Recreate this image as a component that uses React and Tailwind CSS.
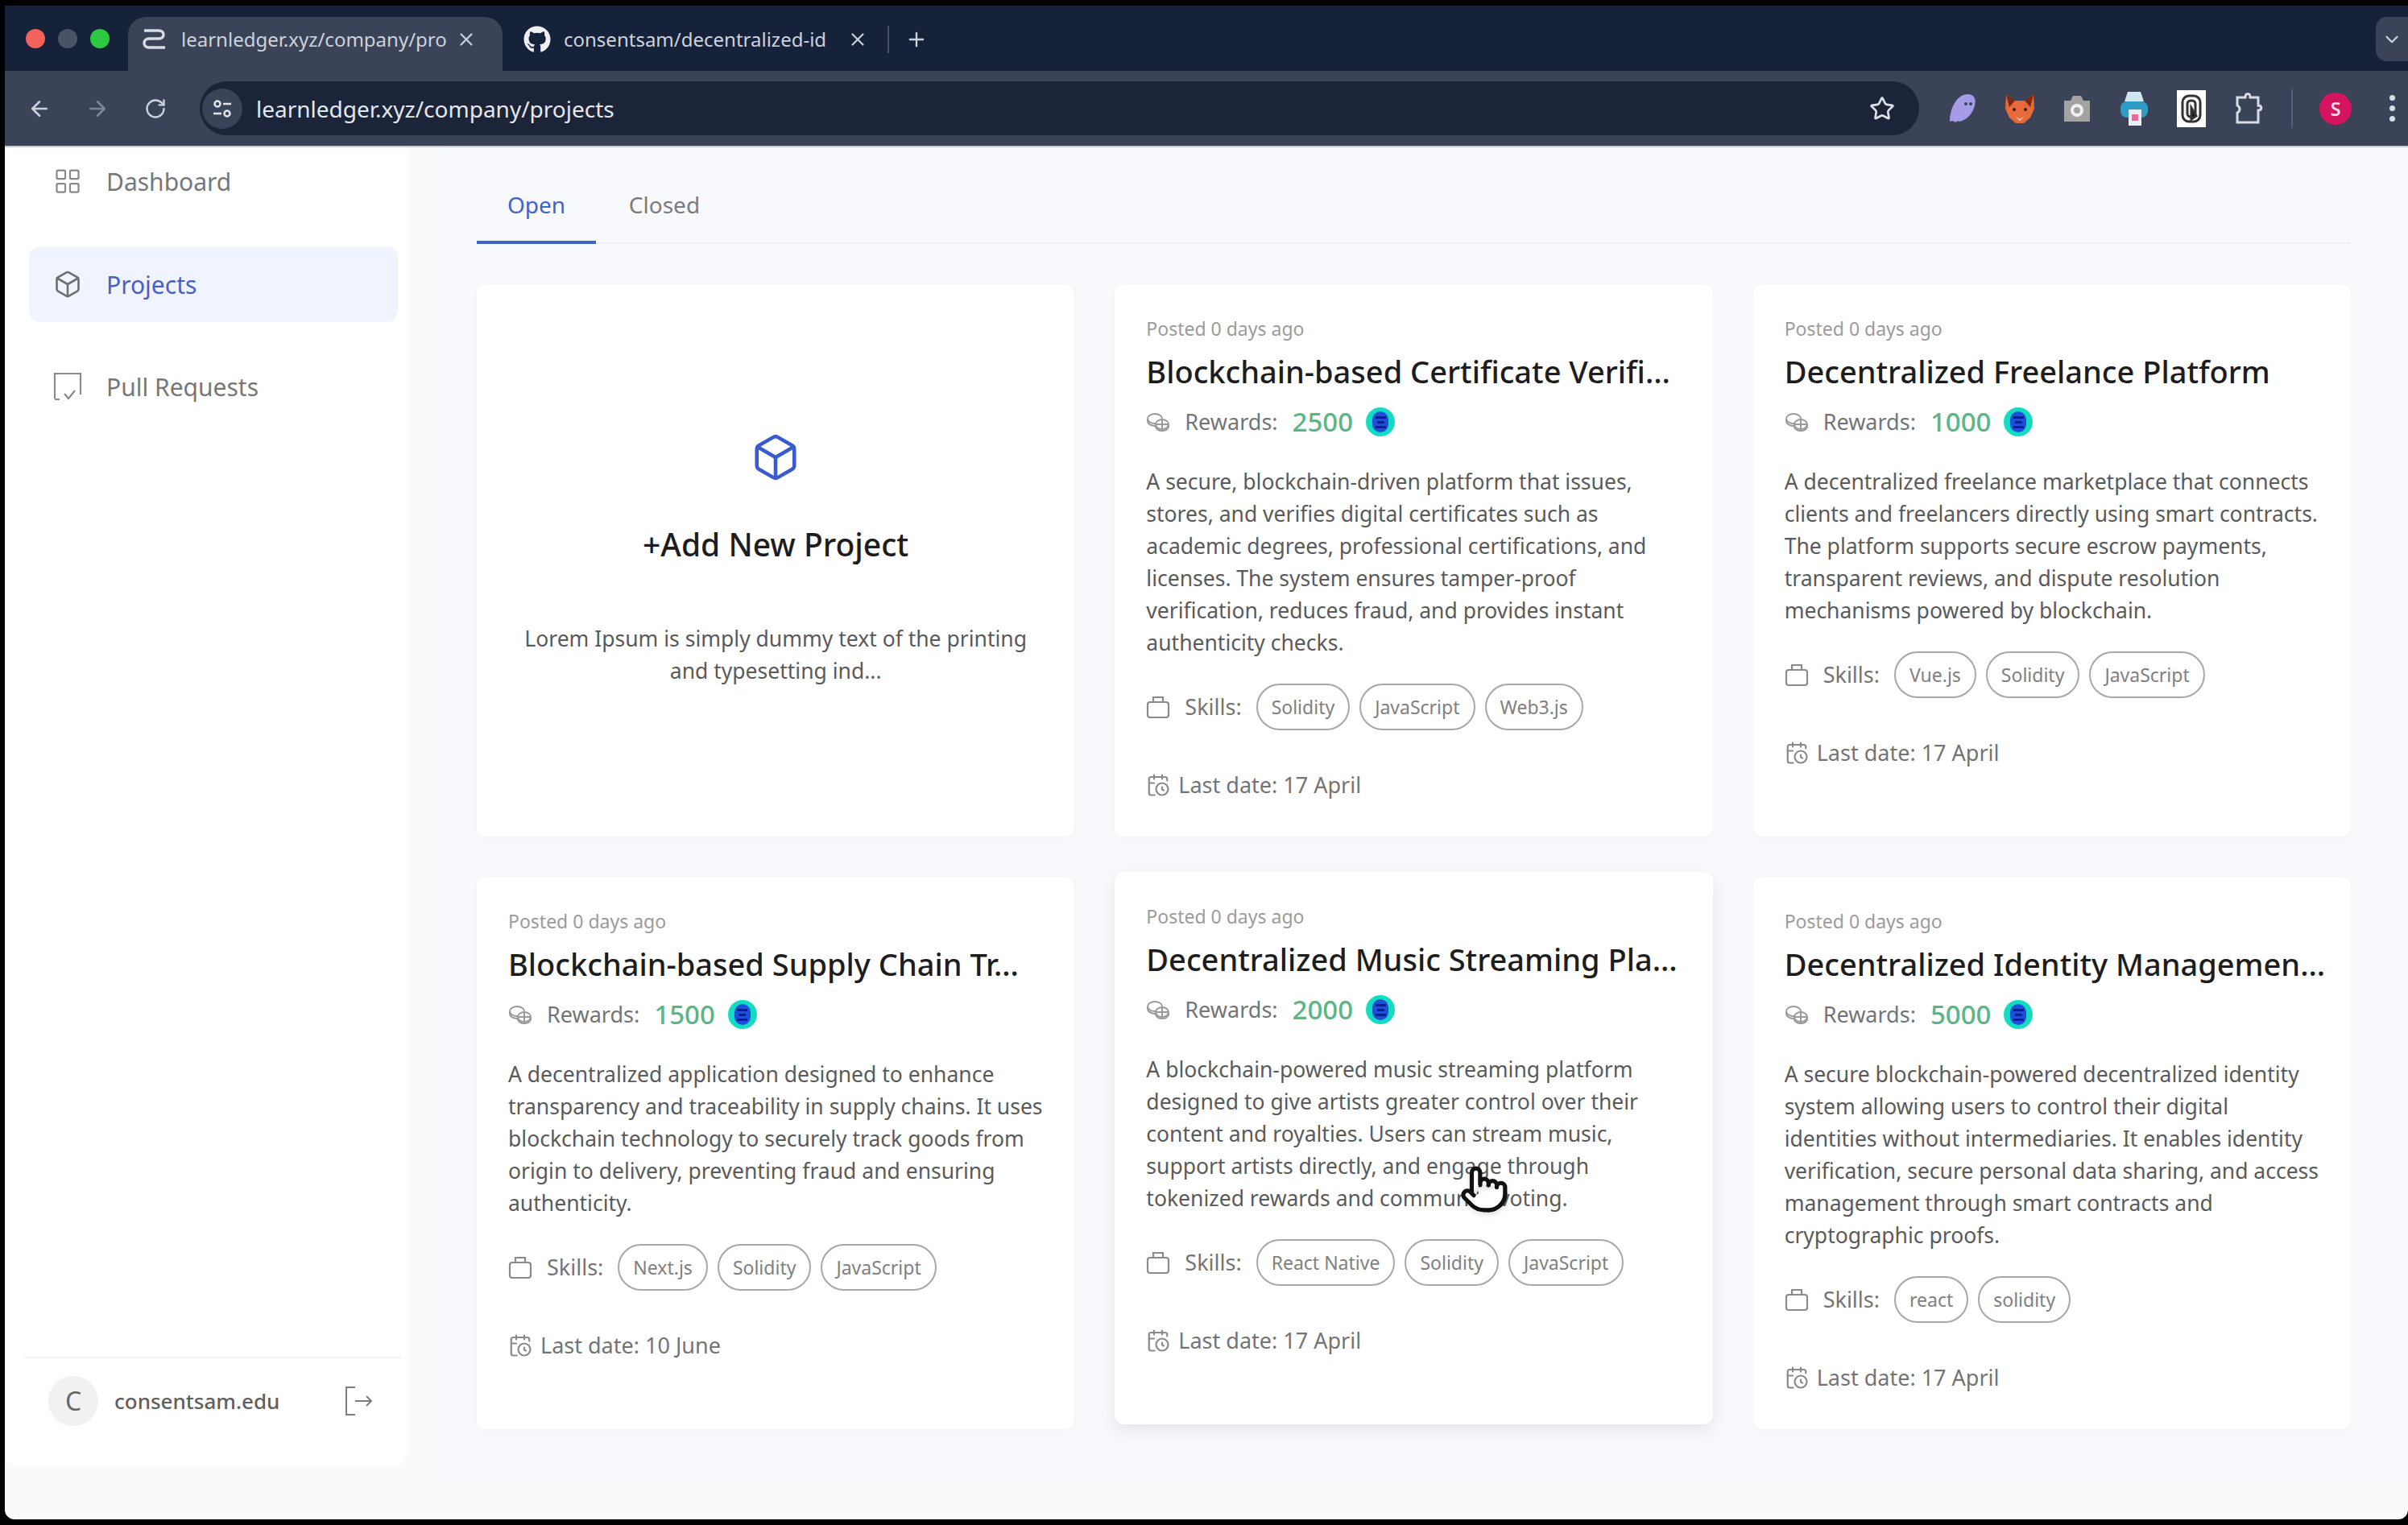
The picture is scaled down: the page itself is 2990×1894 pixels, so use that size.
import { ArrowLeft, ArrowRight, RotateCw, Star, Box, LayoutGrid, CalendarClock, X, Plus, ChevronDown, Pointer } from 'lucide-react';
import { FaGithub } from 'react-icons/fa';

const projects = [
  {
    title: 'Blockchain-based Certificate Verifi...',
    reward: 2500,
    desc: ['A secure, blockchain-driven platform that issues,', 'stores, and verifies digital certificates such as', 'academic degrees, professional certifications, and', 'licenses. The system ensures tamper-proof', 'verification, reduces fraud, and provides instant', 'authenticity checks.'],
    skills: ['Solidity', 'JavaScript', 'Web3.js'],
    date: '17 April',
  },
  {
    title: 'Decentralized Freelance Platform',
    reward: 1000,
    desc: ['A decentralized freelance marketplace that connects', 'clients and freelancers directly using smart contracts.', 'The platform supports secure escrow payments,', 'transparent reviews, and dispute resolution', 'mechanisms powered by blockchain.'],
    skills: ['Vue.js', 'Solidity', 'JavaScript'],
    date: '17 April',
  },
  {
    title: 'Blockchain-based Supply Chain Tr...',
    reward: 1500,
    desc: ['A decentralized application designed to enhance', 'transparency and traceability in supply chains. It uses', 'blockchain technology to securely track goods from', 'origin to delivery, preventing fraud and ensuring', 'authenticity.'],
    skills: ['Next.js', 'Solidity', 'JavaScript'],
    date: '10 June',
  },
  {
    title: 'Decentralized Music Streaming Pla...',
    reward: 2000,
    desc: ['A blockchain-powered music streaming platform', 'designed to give artists greater control over their', 'content and royalties. Users can stream music,', 'support artists directly, and engage through', 'tokenized rewards and community voting.'],
    skills: ['React Native', 'Solidity', 'JavaScript'],
    date: '17 April',
    lifted: true,
  },
  {
    title: 'Decentralized Identity Managemen...',
    reward: 5000,
    desc: ['A secure blockchain-powered decentralized identity', 'system allowing users to control their digital', 'identities without intermediaries. It enables identity', 'verification, secure personal data sharing, and access', 'management through smart contracts and', 'cryptographic proofs.'],
    skills: ['react', 'solidity'],
    date: '17 April',
  },
];

function CoinsIcon() {
  return (
    <svg width="30" height="30" viewBox="0 0 30 30" fill="none" stroke="#9a9a9a" strokeWidth="2">
      <ellipse cx="11" cy="11" rx="9" ry="6" />
      <path d="M2 11v3c0 3 4 6 9 6" />
      <ellipse cx="20" cy="18" rx="8" ry="6" fill="#fff" />
      <path d="M12 18v3c0 3 4 5 8 5s8-2 8-5v-3M20 13v10M13 18h14" />
    </svg>
  );
}

function TokenIcon() {
  return (
    <span className="w-[36px] h-[36px] rounded-full bg-[#14dcc2] flex items-center justify-center">
      <span className="w-[20px] h-[26px] rounded-full bg-[#1d4fd8] flex flex-col items-center justify-center gap-[3px]">
        <span className="w-[13px] h-[3px] bg-[#0b1f8f]" />
        <span className="w-[9px] h-[3px] bg-[#0b1f8f]" />
        <span className="w-[13px] h-[3px] bg-[#0b1f8f]" />
      </span>
    </span>
  );
}

function BagIcon() {
  return (
    <svg width="30" height="30" viewBox="0 0 30 30" fill="none" stroke="#8a8a8a" strokeWidth="2.2">
      <rect x="2" y="9" width="26" height="19" rx="3" />
      <path d="M9 9V3h12v6" />
    </svg>
  );
}

function ProjectCard({ project }) {
  return (
    <div className={`bg-white rounded-[12px] pl-[39px] pr-[30px] pt-[38px] h-[686px] ${project.lifted ? '-translate-y-[6px] shadow-[0_8px_20px_rgba(0,0,0,0.08)]' : 'shadow-[0_1px_6px_rgba(0,0,0,0.03)]'}`}>
      <p className="text-[23px] leading-[34px] text-[#9b9b9b]">Posted 0 days ago</p>
      <h3 className="mt-[11px] text-[38px] leading-[50px] font-medium text-[#1d1d20] whitespace-nowrap">{project.title}</h3>
      <div className="mt-[14px] h-[48px] flex items-center">
        <CoinsIcon />
        <span className="ml-[18px] text-[27px] text-[#747474]">Rewards:</span>
        <span className="ml-[18px] text-[33px] font-medium text-[#5cb585]">{project.reward}</span>
        <span className="ml-[16px]"><TokenIcon /></span>
      </div>
      <div className="mt-[30px] text-[26.5px] leading-[40px] text-[#5a5a5a]">
        {project.desc.map((line) => (
          <p key={line} className="whitespace-nowrap">{line}</p>
        ))}
      </div>
      <div className="mt-[31px] h-[58px] flex items-center">
        <BagIcon />
        <span className="ml-[18px] text-[27px] text-[#747474]">Skills:</span>
        <div className="ml-[18px] flex gap-[12px]">
          {project.skills.map((s) => (
            <span key={s} className="h-[58px] px-[17px] flex items-center rounded-full border-2 border-[#a8a8a8] text-[23px] text-[#808080]">{s}</span>
          ))}
        </div>
      </div>
      <div className="mt-[48px] h-[40px] flex items-center gap-[10px]">
        <CalendarClock size={30} color="#8a8a8a" strokeWidth={1.75} />
        <span className="text-[27px] text-[#747474]">Last date: {project.date}</span>
      </div>
    </div>
  );
}

function AddCard() {
  return (
    <div className="bg-white rounded-[12px] h-[686px] flex flex-col items-center pt-[184px] shadow-[0_1px_6px_rgba(0,0,0,0.03)]">
      <Box size={62} color="#3a5bd0" strokeWidth={1.75} />
      <h3 className="mt-[52px] text-[39px] leading-[50px] font-medium text-[#1d1d20]">+Add New Project</h3>
      <div className="mt-[72px] text-[26.5px] leading-[40px] text-[#5a5a5a] text-center">
        <p>Lorem Ipsum is simply dummy text of the printing</p>
        <p>and typesetting ind...</p>
      </div>
    </div>
  );
}

function SideItem({ icon, label, active }) {
  return (
    <div className={`h-[94px] ml-[30px] mr-[11px] pl-[30px] flex items-center gap-[30px] rounded-[14px] text-[30px] ${active ? 'bg-[#f0f4fe] text-[#4a5fc4]' : 'text-[#777777]'}`}>
      {icon}
      <span>{label}</span>
    </div>
  );
}

function Chrome() {
  return (
    <div className="bg-[#3a4358] text-[#cdd2dc]">
      <div className="h-[81px] bg-[#16213a] flex items-end relative">
        <div className="flex gap-[16px] pl-[26px] items-center mb-[28px]">
          <span className="w-[24px] h-[24px] rounded-full bg-[#f2615a]" />
          <span className="w-[24px] h-[24px] rounded-full bg-[#4a5266]" />
          <span className="w-[24px] h-[24px] rounded-full bg-[#2ac940]" />
        </div>
        <div className="ml-[23px] w-[465px] h-[67px] bg-[#3a4358] rounded-t-[22px] flex items-center pl-[16px] pb-[12px]">
          <svg width="34" height="30" viewBox="0 0 34 30" fill="none" stroke="#d8dce4" strokeWidth="3.5">
            <path d="M4 4h18c8 0 8 10 0 10H10c-8 0-8 11 0 11h20" />
          </svg>
          <span className="ml-[16px] w-[335px] whitespace-nowrap text-[24px]">learnledger.xyz/company/pro</span>
          <X size={26} className="ml-[6px]" />
        </div>
        <div className="h-[67px] flex items-center pl-[26px] pb-[12px]">
          <FaGithub size={34} color="#eef0f4" />
          <span className="ml-[16px] w-[332px] whitespace-nowrap text-[24px]">consentsam/decentralized-id</span>
          <X size={26} className="ml-[20px]" />
          <span className="ml-[24px] w-[2px] h-[34px] bg-[#4a5266]" />
          <Plus size={28} className="ml-[20px]" />
        </div>
        <div className="absolute right-0 top-[14px] w-[40px] h-[55px] bg-[#3a4358] rounded-l-[14px] flex items-center justify-center">
          <ChevronDown size={26} />
        </div>
      </div>
      <div className="h-[93px] flex items-center pl-[28px]">
        <ArrowLeft size={30} />
        <ArrowRight size={30} color="#7f8797" className="ml-[42px]" />
        <RotateCw size={28} className="ml-[43px]" />
        <div className="ml-[41px] w-[2135px] h-[67px] rounded-full bg-[#1b2438] flex items-center pl-[3px]">
          <span className="w-[50px] h-[50px] rounded-full bg-[#3a4358] flex items-center justify-center">
            <svg width="26" height="26" viewBox="0 0 26 26" fill="none" stroke="#e2e5ea" strokeWidth="2.5">
              <circle cx="7" cy="7" r="3.5" /><path d="M14 7h10M2 19h10" /><circle cx="19" cy="19" r="3.5" />
            </svg>
          </span>
          <span className="ml-[17px] text-[28px] text-[#e4e7ec]">learnledger.xyz/company/projects</span>
          <Star size={32} strokeWidth={2} color="#dfe2e8" className="ml-auto mr-[30px]" />
        </div>
        <div className="ml-[36px] flex items-center gap-[35px]">
          <svg width="36" height="40" viewBox="0 0 36 40"><path d="M2 36C2 18 12 2 24 2c9 0 11 7 9 14-2 9-9 18-19 20-2-2-3 0-5 1-2-2-4-2-7-1z" fill="#a59be6" /><circle cx="22" cy="14" r="2" fill="#3a4358" /><circle cx="28" cy="14" r="2" fill="#3a4358" /></svg>
          <svg width="36" height="40" viewBox="0 0 36 40"><path d="M1 2l11 8h12l11-8 1 18-5 11-8 7h-10l-8-7-5-11z" fill="#e8693a" /><path d="M1 2l11 8-7 8zM35 2L24 10l7 8z" fill="#7a2a12" /><path d="M13 30l5 3 5-3-5 5z" fill="#f4e5d8" /><circle cx="11" cy="21" r="2" fill="#3a1a10" /><circle cx="25" cy="21" r="2" fill="#3a1a10" /></svg>
          <svg width="36" height="36" viewBox="0 0 36 36"><path d="M2 8h8l3-6h10l3 6h8v26H2z" fill="#a3a3a3" /><circle cx="18" cy="20" r="8" fill="#f1f1f1" /><circle cx="18" cy="20" r="4" fill="#a3a3a3" /></svg>
          <svg width="36" height="46" viewBox="0 0 36 46"><path d="M10 2h16l4 12H6z" fill="#cfe6f2" /><rect x="1" y="14" width="34" height="20" rx="8" fill="#2f9cc4" /><rect x="11" y="24" width="16" height="20" fill="#e8eef4" /><rect x="15" y="30" width="8" height="8" fill="#e86aa0" /></svg>
          <span className="w-[36px] h-[46px] bg-white flex items-center justify-center">
            <svg width="28" height="38" viewBox="0 0 28 38" fill="none" stroke="#333" strokeWidth="3"><rect x="3" y="3" width="22" height="32" rx="8" /><rect x="9" y="9" width="10" height="20" rx="4" /><path d="M14 18l6 10-6 4z" fill="#111" /></svg>
          </span>
          <svg width="36" height="46" viewBox="0 0 36 46" fill="none" stroke="#d8dce4" strokeWidth="3"><path d="M4 9h10c0-6 6-6 6 0h10v10c5 0 5 6 0 6v15H4V28c4-2 4-7 0-9z" /></svg>
        </div>
        <span className="ml-[35px] w-[2px] h-[48px] bg-[#59617a]" />
        <span className="ml-[33px] w-[40px] h-[40px] rounded-full bg-[#d4145f] flex items-center justify-center text-[24px] font-semibold text-[#f5d9e4]">S</span>
        <div className="ml-[47px] flex flex-col gap-[6px]">
          <span className="w-[7px] h-[7px] rounded-full bg-[#d8dce4]" />
          <span className="w-[7px] h-[7px] rounded-full bg-[#d8dce4]" />
          <span className="w-[7px] h-[7px] rounded-full bg-[#d8dce4]" />
        </div>
      </div>
    </div>
  );
}

export default function App() {
  return (
    <div className="relative w-[2990px] h-[1894px] bg-black pt-[7px] overflow-hidden font-['Noto_Sans','Open_Sans',sans-serif]">
      <div className="ml-[6px]">
        <Chrome />
      </div>
      <div className="ml-[6px] h-[1706px] bg-[#fafafa] rounded-b-[12px] flex flex-col border-t-2 border-[#c9ccd4] overflow-hidden">
        <div className="flex h-[1658px] gap-[40px]">
          <aside className="w-[499px] h-[1638px] bg-white rounded-b-[16px] flex flex-col">
            <div className="-mt-[5px]">
              <SideItem icon={<LayoutGrid size={36} color="#8a8a8a" strokeWidth={1.5} />} label="Dashboard" />
            </div>
            <div className="mt-[34px]">
              <SideItem active icon={<Box size={36} color="#6f6f6f" strokeWidth={1.75} />} label="Projects" />
            </div>
            <div className="mt-[33px]">
              <SideItem icon={
                <svg width="36" height="38" viewBox="0 0 36 38" fill="none" stroke="#8a8a8a" strokeWidth="2.2">
                  <path d="M2 34V3h32v26M2 35h6M14 28l5 6 8-10" />
                </svg>
              } label="Pull Requests" />
            </div>
            <div className="mt-auto ml-[24px] mr-[6px] border-t-2 border-[#f3f3f3] h-[136px] flex items-start pt-[22px] pl-[30px]">
              <span className="w-[62px] h-[62px] rounded-full bg-[#f1f1f1] flex items-center justify-center text-[32px] text-[#666]">C</span>
              <span className="ml-[20px] h-[62px] flex items-center text-[26px] font-medium text-[#5f5f5f]">consentsam.edu</span>
              <svg className="ml-auto mr-[36px] mt-[12px]" width="36" height="38" viewBox="0 0 36 38" fill="none" stroke="#7d7d7d" strokeWidth="2">
                <path d="M14 2H3v34h11M14 19h20M28 13l6 6-6 6" />
              </svg>
            </div>
          </aside>
          <main className="flex-1 bg-[#f8f9fc] pl-[47px] pr-[71px] pt-[40px]">
            <div className="flex items-end h-[80px] border-b-2 border-[#eef0f4]">
              <div className="w-[148px] h-[80px] pt-[10px] flex justify-center text-[28px] text-[#3f62d0] border-b-4 border-[#3f62d0] -mb-[2px]">Open</div>
              <div className="w-[170px] h-[80px] pt-[10px] flex justify-center text-[28px] text-[#7b7b7b] -mb-[2px]">Closed</div>
            </div>
            <div className="mt-[50px] grid grid-cols-3 gap-[50px]">
              <AddCard />
              {projects.map((p) => (
                <ProjectCard key={p.title} project={p} />
              ))}
            </div>
          </main>
        </div>
      </div>
      <Pointer size={62} fill="#ffffff" color="#111111" strokeWidth={2} className="absolute left-[1812px] top-[1446px] drop-shadow-md" />
    </div>
  );
}
